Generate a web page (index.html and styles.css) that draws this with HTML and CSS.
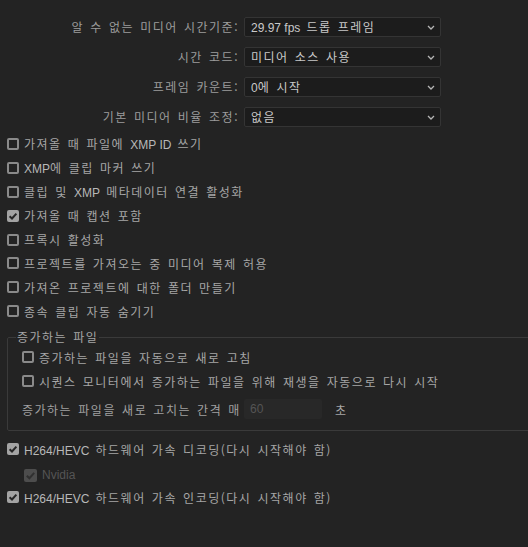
FILE: index.html
```html
<!DOCTYPE html>
<html lang="ko">
<head>
<meta charset="utf-8">
<title>미디어 환경 설정</title>
<link rel="stylesheet" href="styles.css">
</head>
<body>
<div class="prefs">
  <div class="form-grid">
    <div class="flabel">알 수 없는 미디어 시간기준:</div>
    <div class="select"><span class="val"><span class="latin">29.97 fps</span> 드롭 프레임</span><svg class="chev" width="8" height="5" viewBox="0 0 8 5"><path d="M1 1 L4 4 L7 1" fill="none" stroke="#b5b5b5" stroke-width="1.3"/></svg></div>
    <div class="flabel">시간 코드:</div>
    <div class="select"><span class="val">미디어 소스 사용</span><svg class="chev" width="8" height="5" viewBox="0 0 8 5"><path d="M1 1 L4 4 L7 1" fill="none" stroke="#b5b5b5" stroke-width="1.3"/></svg></div>
    <div class="flabel">프레임 카운트:</div>
    <div class="select"><span class="val"><span class="latin">0</span>에 시작</span><svg class="chev" width="8" height="5" viewBox="0 0 8 5"><path d="M1 1 L4 4 L7 1" fill="none" stroke="#b5b5b5" stroke-width="1.3"/></svg></div>
    <div class="flabel">기본 미디어 비율 조정:</div>
    <div class="select"><span class="val">없음</span><svg class="chev" width="8" height="5" viewBox="0 0 8 5"><path d="M1 1 L4 4 L7 1" fill="none" stroke="#b5b5b5" stroke-width="1.3"/></svg></div>
  </div>

  <ul class="checks">
    <li class="check"><span class="box"></span><span>가져올 때 파일에 <b class="latin">XMP ID</b> 쓰기</span></li>
    <li class="check"><span class="box"></span><span><b class="latin">XMP</b>에 클립 마커 쓰기</span></li>
    <li class="check"><span class="box"></span><span>클립 및 <b class="latin">XMP</b> 메타데이터 연결 활성화</span></li>
    <li class="check"><span class="box on"><svg width="12" height="12" viewBox="0 0 12 12"><path d="M2.6 6.2 L5 8.5 L9.4 3.6" fill="none" stroke="#262626" stroke-width="2"/></svg></span><span>가져올 때 캡션 포함</span></li>
    <li class="check"><span class="box"></span><span>프록시 활성화</span></li>
    <li class="check"><span class="box"></span><span>프로젝트를 가져오는 중 미디어 복제 허용</span></li>
    <li class="check"><span class="box"></span><span>가져온 프로젝트에 대한 폴더 만들기</span></li>
    <li class="check"><span class="box"></span><span>종속 클립 자동 숨기기</span></li>
  </ul>

  <fieldset class="group">
    <legend>증가하는 파일</legend>
    <div class="check inner"><span class="box"></span><span>증가하는 파일을 자동으로 새로 고침</span></div>
    <div class="check inner"><span class="box"></span><span>시퀀스 모니터에서 증가하는 파일을 위해 재생을 자동으로 다시 시작</span></div>
    <div class="interval"><span class="ilabel">증가하는 파일을 새로 고치는 간격 매</span><span class="num latin">60</span><span class="unit">초</span></div>
  </fieldset>

  <div class="check hw"><span class="box on"><svg width="12" height="12" viewBox="0 0 12 12"><path d="M2.6 6.2 L5 8.5 L9.4 3.6" fill="none" stroke="#262626" stroke-width="2"/></svg></span><span><b class="latin">H264/HEVC</b> 하드웨어 가속 디코딩(다시 시작해야 함)</span></div>
  <div class="check sub"><span class="box on dis"><svg width="13" height="13" viewBox="0 0 13 13"><path d="M2.8 6.7 L5.4 9.2 L10.2 3.9" fill="none" stroke="#303030" stroke-width="2"/></svg></span><span class="latin distext">Nvidia</span></div>
  <div class="check hw2"><span class="box on"><svg width="12" height="12" viewBox="0 0 12 12"><path d="M2.6 6.2 L5 8.5 L9.4 3.6" fill="none" stroke="#262626" stroke-width="2"/></svg></span><span><b class="latin">H264/HEVC</b> 하드웨어 가속 인코딩(다시 시작해야 함)</span></div>
</div>
</body>
</html>
```

FILE: styles.css
```css
html, body {
  margin: 0;
  padding: 0;
  background: #232323;
  overflow: hidden;
}
body {
  width: 528px;
  height: 547px;
  font-family: "Noto Sans CJK KR", "Liberation Sans", sans-serif;
  font-size: 12px;
  letter-spacing: 1.5px;
  word-spacing: 1.3px;
  color: #a6a6a6;
}
.latin {
  font-family: "Liberation Sans", "Noto Sans CJK KR", sans-serif;
  letter-spacing: 0;
  word-spacing: 0;
}
b.latin {
  font-weight: normal;
  color: #b8b8b8;
}
.prefs {
  display: flex;
  flex-direction: column;
}
.form-grid {
  display: grid;
  grid-template-columns: 238px 197px;
  grid-auto-rows: 20px;
  column-gap: 6px;
  row-gap: 10px;
  margin-top: 17px;
}
.flabel {
  text-align: right;
  line-height: 20px;
  color: #9c9c9c;
  white-space: nowrap;
  margin-right: -1px;
}
.select {
  box-sizing: border-box;
  height: 20px;
  background: #1c1c1c;
  border: 1px solid #343434;
  border-radius: 2px;
  display: flex;
  align-items: center;
  justify-content: space-between;
  padding: 0 5px 0 6px;
  color: #c9c9c9;
}
.val {
  line-height: 18px;
  white-space: nowrap;
}
.chev {
  display: block;
}
.checks {
  list-style: none;
  margin: 5px 0 0 0;
  padding: 0;
}
.check {
  display: flex;
  align-items: center;
  gap: 5px;
  height: 23.9px;
  padding-left: 7px;
  white-space: nowrap;
}
.box {
  box-sizing: border-box;
  width: 12px;
  height: 12px;
  border: 2px solid #8a8a8a;
  border-radius: 2px;
  flex: none;
  display: flex;
  align-items: center;
  justify-content: center;
}
.box.on {
  border: none;
  background: #a3a3a3;
}
.box.dis {
  width: 13px;
  height: 13px;
  background: #4d4d4d;
}
.group {
  margin: 6px -20px 0 7px;
  padding: 0 0 11px 8px;
  border: 1px solid #3a3a3a;
  border-radius: 2px;
  min-width: 0;
}
.group legend {
  padding: 0 1px;
  line-height: 16px;
  color: #a6a6a6;
}
.check.inner {
  height: 24px;
  padding-left: 6px;
}
.interval {
  display: flex;
  align-items: center;
  height: 20px;
  margin-top: 6px;
  padding-left: 6px;
  white-space: nowrap;
}
.ilabel {
  width: 222px;
  color: #a0a0a0;
}
.num {
  box-sizing: border-box;
  width: 78px;
  height: 20px;
  line-height: 20px;
  background: #282828;
  border-radius: 2px;
  padding-left: 6px;
  color: #555555;
}
.unit {
  margin-left: 13px;
  color: #a6a6a6;
}
.check.hw {
  margin-top: 6px;
  height: 24px;
}
.check.sub {
  margin-top: 3px;
  height: 22px;
  padding-left: 24px;
}
.distext {
  color: #555555;
}
.check.hw2 {
  height: 22px;
}
```
